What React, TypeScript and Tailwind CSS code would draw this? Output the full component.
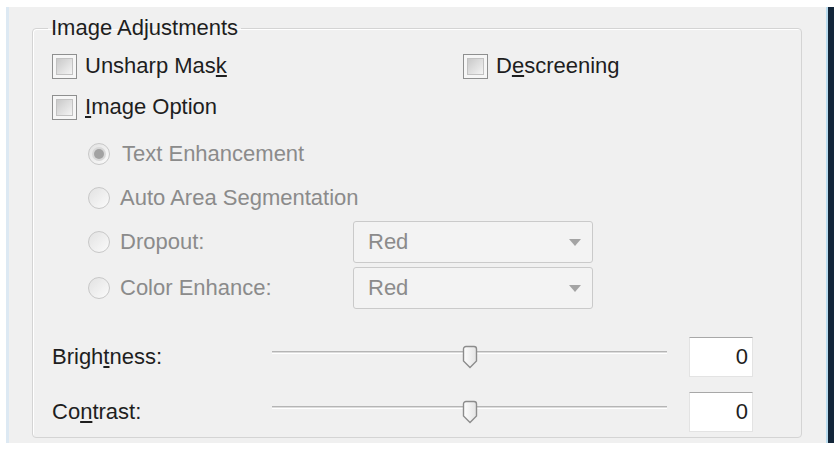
function CheckBox() {
  return (
    <span className="flex h-[25px] w-[25px] shrink-0 border border-[#8e8f8f] bg-[#f6f6f6] p-[3px]">
      <span className="h-full w-full border border-[#c2c2c2] bg-linear-to-br from-[#c9c9c9] to-[#f4f4f4]" />
    </span>
  );
}

function Radio({ checked }: { checked?: boolean }) {
  return (
    <span className="flex h-[22px] w-[22px] shrink-0 items-center justify-center rounded-full border border-[#c8c8c8] bg-linear-to-br from-[#e2e2e2] to-[#fbfbfb]">
      {checked && <span className="h-[10px] w-[10px] rounded-full bg-[#a2a2a2] ring-2 ring-[#d8d8d8]" />}
    </span>
  );
}

function Select({ value }: { value: string }) {
  return (
    <div className="flex h-[42px] w-[240px] items-center justify-between rounded-[3px] border border-[#cacaca] bg-[#f3f3f3] pl-[14px] pr-[11px] text-[#8b8b8b]">
      <span>{value}</span>
      <svg width="12" height="7" viewBox="0 0 12 7">
        <path d="M0 0h12L6 7z" fill="#a4a4a4" />
      </svg>
    </div>
  );
}

function Slider({ pos }: { pos: number }) {
  return (
    <div className="relative h-[40px] w-[395px]">
      <div className="absolute left-0 right-0 top-[14px] h-[3px] border-t border-b border-t-[#b5b5b5] border-b-white bg-[#dcdcdc]" />
      <svg
        className="absolute top-[8px]"
        style={{ left: pos - 8 }}
        width="16"
        height="24"
        viewBox="0 0 16 24"
      >
        <defs>
          <linearGradient id="thumb" x1="0" y1="0" x2="1" y2="0">
            <stop offset="0" stopColor="#fdfdfd" />
            <stop offset="1" stopColor="#e4e4e4" />
          </linearGradient>
        </defs>
        <path
          d="M4 1.5h8a2.5 2.5 0 0 1 2.5 2.5v12l-6.5 6.5l-6.5-6.5v-12a2.5 2.5 0 0 1 2.5-2.5z"
          fill="url(#thumb)"
          stroke="#8c8c8c"
          strokeWidth="1.4"
        />
      </svg>
    </div>
  );
}

function NumBox({ value }: { value: string }) {
  return (
    <div className="flex h-[40px] w-[64px] items-center justify-end border border-[#e3e3e3] border-t-[#a8a8a8] bg-white pr-[4px] text-[#1e1e1e]">
      {value}
    </div>
  );
}

export default function App() {
  return (
    <div className="flex h-[451px] w-[834px] bg-white pb-[8px] pl-[6px] pt-[7px] font-['Liberation_Sans',Arial,sans-serif] text-[22px] leading-[26px] text-[#1e1e1e]">
      <div className="w-[3px] bg-[#dde9f3]" />
      <div className="flex flex-1 flex-col bg-[#f0f0f0] pl-[23px] pr-[24px] pt-[8px]">
        <fieldset className="flex flex-col rounded-[4px] border border-[#d4d4d4] shadow-[inset_1px_1px_0_#fff] pb-[5px] pl-[19px]">
          <legend className="ml-[-4px] px-[3px]">Image Adjustments</legend>

          {/* checkboxes */}
          <div className="flex h-[50px] items-center">
            <label className="flex w-[411px] items-center gap-[8px]">
              <CheckBox />
              <span>
                Unsharp Mas<u>k</u>
              </span>
            </label>
            <label className="flex items-center gap-[8px]">
              <CheckBox />
              <span>
                D<u>e</u>screening
              </span>
            </label>
          </div>
          <label className="flex h-[32px] items-center gap-[8px]">
            <CheckBox />
            <span>
              <u>I</u>mage Option
            </span>
          </label>

          {/* image options (disabled) */}
          <div className="mt-[9px] flex flex-col pl-[36px] text-[#8b8b8b]">
            <div className="flex h-[44px] items-center gap-[12px]">
              <Radio checked />
              <span>Text Enhancement</span>
            </div>
            <div className="flex h-[44px] items-center gap-[10px]">
              <Radio />
              <span>Auto Area Segmentation</span>
            </div>
            <div className="flex h-[44px] items-center">
              <div className="flex w-[265px] items-center gap-[10px]">
                <Radio />
                <span>Dropout:</span>
              </div>
              <Select value="Red" />
            </div>
            <div className="mt-[2px] flex h-[44px] items-center">
              <div className="flex w-[265px] items-center gap-[10px]">
                <Radio />
                <span>Color Enhance:</span>
              </div>
              <Select value="Red" />
            </div>
          </div>

          {/* sliders */}
          <div className="mt-[27px] flex h-[40px] items-center">
            <span className="w-[220px]">
              Brigh<u>t</u>ness:
            </span>
            <Slider pos={198} />
            <div className="ml-[22px]">
              <NumBox value="0" />
            </div>
          </div>
          <div className="mt-[15px] flex h-[40px] items-center">
            <span className="w-[220px]">
              Co<u>n</u>trast:
            </span>
            <Slider pos={198} />
            <div className="ml-[22px]">
              <NumBox value="0" />
            </div>
          </div>
        </fieldset>
      </div>
      <div className="w-[2px] bg-[#b9dcef]" />
      <div className="w-[6px] bg-[#13263a]" />
    </div>
  );
}
